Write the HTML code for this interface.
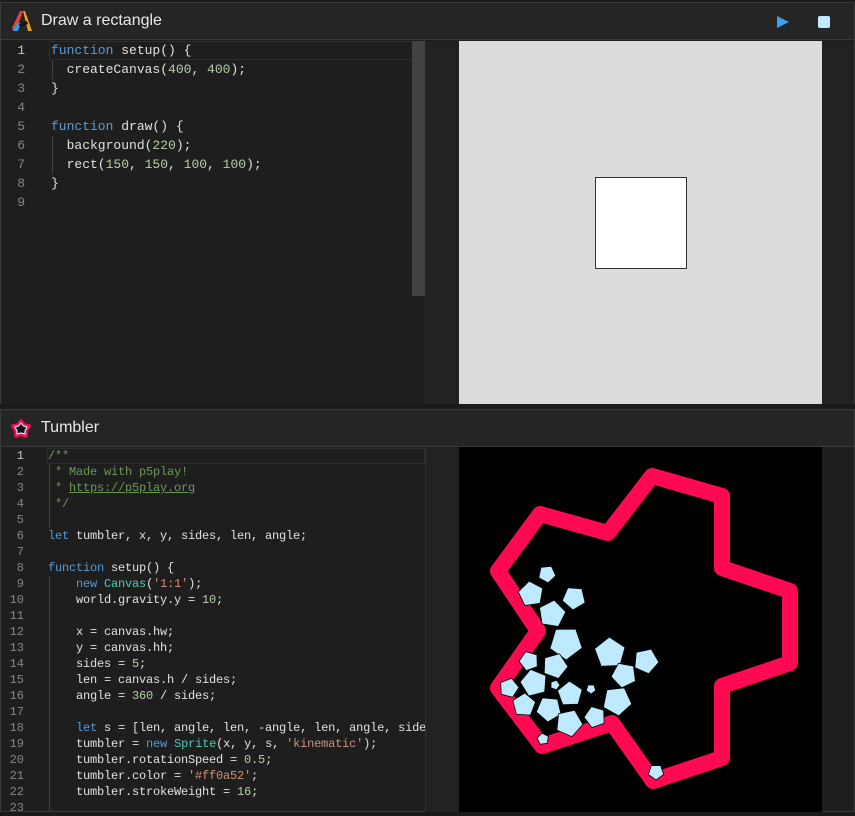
<!DOCTYPE html>
<html><head><meta charset="utf-8"><style>
*{margin:0;padding:0;box-sizing:border-box}
body{width:855px;height:812px;background:#1a1a1a;overflow:hidden;position:relative;font-family:"Liberation Sans",sans-serif}
.panel{position:absolute;left:0;width:855px;border:1px solid #3a3a3a;background:#1e1e1e}
.hdr{position:absolute;left:0;top:0;width:100%;height:37px;background:#252525;border-bottom:1px solid #3a3a3a}
.title{position:absolute;left:40px;top:9px;color:#e8e8e8;font-size:16px}
.code{position:absolute;font-family:"Liberation Mono",monospace;white-space:pre;color:#e0e0e0}
.ln{position:absolute;font-family:"Liberation Mono",monospace;white-space:pre;color:#858585;text-align:right}
.k{color:#569cd6}.n{color:#b5cea8}.c{color:#6a9955}.s{color:#ce9178}.t{color:#4ec9b0}
.g{position:absolute;width:1px;background:#404040}
</style></head><body>
<div class="panel" style="top:2px;height:402px">
 <div class="hdr">
  <svg style="position:absolute;left:11px;top:8px" width="20" height="21" viewBox="0 0 20 21">
   <polygon points="8,0 11,0 6,14 1,20 0,17" fill="#e8403a"/>
   <polygon points="11,0 13,0 20,20 16,20" fill="#f0a020"/>
   <polygon points="1,20 5,12 9,12 6,20" fill="#2a9de0"/>
   <polygon points="7,13 15,10 16,13 8,16" fill="#111"/>
  </svg>
  <div class="title">Draw a rectangle</div>
  <svg style="position:absolute;left:776px;top:13px" width="12" height="12"><polygon points="0,0 12,6 0,12" fill="#3ba0f0"/></svg>
  <div style="position:absolute;left:817px;top:13px;width:12px;height:12px;background:#bdeaff;border-radius:2px"></div>
 </div>
 <div style="position:absolute;left:0;top:38px;width:424px;height:363px;background:#1e1e1e"></div>
 <div style="position:absolute;left:48px;top:38px;width:376px;height:19px;border:1px solid #2c2c2c"></div>
 <div class="g" style="left:51px;top:57px;height:19px"></div>
 <div class="g" style="left:51px;top:133px;height:38px"></div>
 <div style="position:absolute;left:411px;top:38px;width:13px;height:255px;background:#424242"></div>
 <div style="position:absolute;left:424px;top:38px;width:429px;height:363px;background:#222"></div>
 <div style="position:absolute;left:458px;top:38px;width:363px;height:363px;background:#dcdcdc">
  <div style="position:absolute;left:136px;top:136px;width:92px;height:92px;background:#fff;border:1px solid #333"></div>
 </div>
 <div class="ln" style="left:0;top:38px;width:24px;font-size:13px;line-height:19px"><span style="color:#c6c6c6">1</span>
2
3
4
5
6
7
8
9</div>
 <div class="code" style="left:50px;top:38px;font-size:13px;line-height:19px"><span class="k">function</span> setup() {
  createCanvas(<span class="n">400</span>, <span class="n">400</span>);
}

<span class="k">function</span> draw() {
  background(<span class="n">220</span>);
  rect(<span class="n">150</span>, <span class="n">150</span>, <span class="n">100</span>, <span class="n">100</span>);
}
</div>
</div>

<div class="panel" style="top:409px;height:403px">
 <div class="hdr">
  <svg style="position:absolute;left:9px;top:8px" width="22" height="22" viewBox="-11 -11 22 22">
   <path d="M0,-8 L3,-4 L8,-3 L5,2 L5,7 L0,5 L-5,7 L-5,2 L-8,-3 L-3,-4 Z" fill="none" stroke="#ff0a52" stroke-width="3.5" stroke-linejoin="round"/>
   <path d="M0,-6 L2.5,-3 L6,-2 L4,2 L4,5 L0,4 L-4,5 L-4,2 L-6,-2 L-2.5,-3 Z" fill="#111" stroke="#bdeaff" stroke-width="1.2"/>
  </svg>
  <div class="title">Tumbler</div>
 </div>
 <div style="position:absolute;left:46px;top:38px;width:378px;height:16px;border:1px solid #2c2c2c"></div>
 <div class="g" style="left:48px;top:54px;height:64px"></div>
 <div class="g" style="left:48px;top:166px;height:236px"></div>
 <div style="position:absolute;left:424px;top:38px;width:34px;height:364px;background:#222;border-left:1px solid #333"></div>
 <div class="ln" style="left:0;top:38px;width:23px;font-size:12px;line-height:16px"><span style="color:#c6c6c6">1</span>
2
3
4
5
6
7
8
9
10
11
12
13
14
15
16
17
18
19
20
21
22
23</div>
 <div class="code" style="left:47px;top:38px;width:377px;overflow:hidden;font-size:12px;line-height:16px;letter-spacing:-0.2px"><span class="c">/**
 * Made with p5play!
 * <u>https://p5play.org</u>
 */</span>

<span class="k">let</span> tumbler, x, y, sides, len, angle;

<span class="k">function</span> setup() {
    <span class="k">new</span> <span class="t">Canvas</span>(<span class="s">'1:1'</span>);
    world.gravity.y = <span class="n">10</span>;

    x = canvas.hw;
    y = canvas.hh;
    sides = <span class="n">5</span>;
    len = canvas.h / sides;
    angle = <span class="n">360</span> / sides;

    <span class="k">let</span> s = [len, angle, len, -angle, len, angle, sides];
    tumbler = <span class="k">new</span> <span class="t">Sprite</span>(x, y, s, <span class="s">'kinematic'</span>);
    tumbler.rotationSpeed = <span class="n">0.5</span>;
    tumbler.color = <span class="s">'#ff0a52'</span>;
    tumbler.strokeWeight = <span class="n">16</span>;
</div>
</div>

<svg style="position:absolute;left:0;top:0" width="855" height="812">
 <rect x="459" y="447" width="363" height="365" fill="#000"/>
 <polygon points="652,476 722,496 722,568 790,591 790,663 722,686 722,758 653,781 612,723 542,746 498,688 538,631 498,571 540,514 608,533" fill="none" stroke="#ff0a52" stroke-width="16" stroke-linejoin="round"/>
 <g fill="#bdeaff" stroke="#000" stroke-width="0.8" id="p"></g>
</svg>
<script>
var d=[[547,574,9,.2],[531,594,13,.8],[574,598,12,.4],[552,614,14,1.1],[566,643,17,.3],[610,653,16,.9],[646,661,13,.1],[529,661,10,.6],[555,666,13,1.3],[624,675,13,.5],[534,683,14,.7],[509,688,10,1.2],[555,685,5,0],[591,689,5,.3],[570,694,13,.9],[617,701,15,.2],[524,705,12,1],[549,709,13,.4],[569,723,14,.1],[595,717,11,.6],[543,739,6,.8],[656,772,8,.3]];
var g=document.getElementById('p'),s='';
d.forEach(function(a){var p=[];for(var i=0;i<5;i++){var t=a[3]+i*Math.PI*2/5;p.push((a[0]+a[2]*Math.cos(t)).toFixed(1)+','+(a[1]+a[2]*Math.sin(t)).toFixed(1));}s+='<polygon points="'+p.join(' ')+'"/>';});
g.innerHTML=s;
</script>
</body></html>
